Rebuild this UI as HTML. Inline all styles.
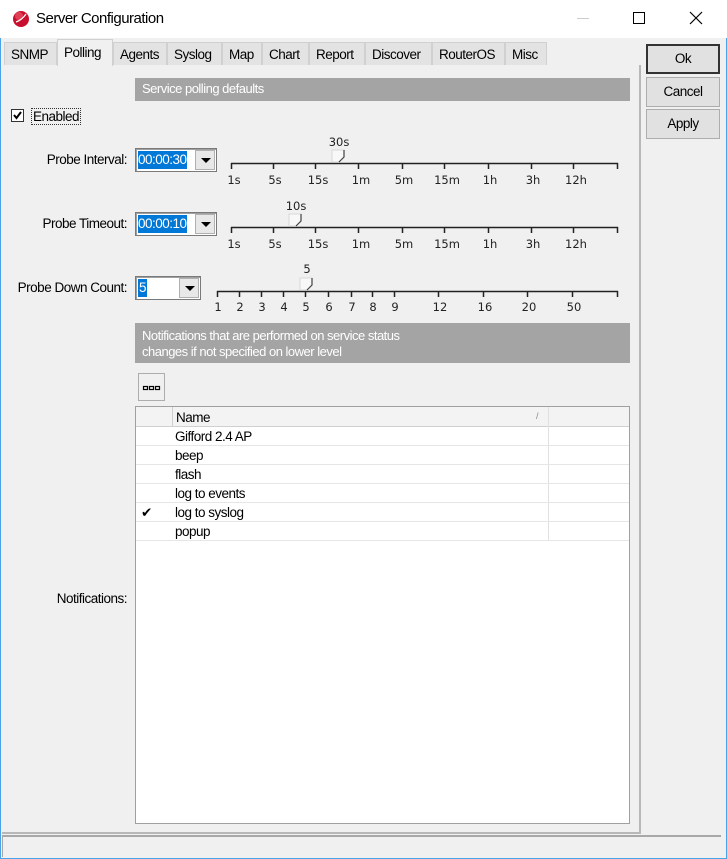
<!DOCTYPE html>
<html><head><meta charset="utf-8"><style>
*{margin:0;padding:0;box-sizing:border-box}
body{width:727px;height:859px;background:#f0f0f0;font-family:"Liberation Sans",sans-serif;font-size:13px;color:#000;position:relative;overflow:hidden;letter-spacing:-0.5px}
.a{position:absolute}
.win{left:0;top:0;width:727px;height:859px;border:1px solid #4aa3e8;border-top:none}
.title{left:0;top:0;width:727px;height:38px;background:#fff}
.tab{top:42px;height:23px;background:#e3e3e3;border:1px solid #d0d0d0;border-bottom:none;padding:4px 6px 0;font-size:13.5px}
.panel{left:2px;top:65px;width:639px;height:769px;border-right:2px solid #b8b8b8;border-bottom:2px solid #b8b8b8;background:#f0f0f0}
.hdr{background:#a4a4a4;color:#fff;padding:3px 7px;font-size:13px}
.lbl{font-size:13.5px;text-align:right}
.combo{height:24px;border:1px solid #7a7a7a;background:#fff;box-shadow:inset 1px 1px #a0a0a0}
.combo .sel{position:absolute;left:2px;top:2px;background:#0078d7;color:#fff;padding:1px 0;font-size:13.5px;line-height:16px}
.combo .btn{position:absolute;right:1px;top:1px;width:20px;height:20px;background:#e8e8e8;border:1px solid #b0b0b0}
.combo .btn:after{content:"";position:absolute;left:5px;top:7px;border-left:5px solid transparent;border-right:5px solid transparent;border-top:5px solid #000}
.rbtn{left:646px;width:74px;height:30px;border:1px solid #adadad;background:#e1e1e1;text-align:center;line-height:28px;font-size:13.5px}
.grid{left:135px;top:406px;width:495px;height:418px;background:#fff;border:1px solid #a0a0a0}
.row{position:absolute;left:0;width:493px;height:19px;border-bottom:1px solid #e6e6e6}
.row span{position:absolute;left:39px;top:2px;font-size:13.5px}
</style></head><body>
<div class="a win"></div>
<div class="a title">
 <svg class="a" style="left:12px;top:10px" width="18" height="18" viewBox="0 0 18 18"><circle cx="9" cy="9" r="8" fill="#c8102e"/><circle cx="7" cy="6" r="4" fill="#f06070" opacity=".6"/><path d="M4 12 Q10 10 14 4" stroke="#fff" stroke-width="1.2" fill="none"/></svg>
 <div class="a" style="left:36px;top:10px;font-size:15px">Server Configuration</div>
 <div class="a" style="left:577px;top:18px;width:12px;height:1px;background:#ccc"></div>
 <div class="a" style="left:633px;top:12px;width:12px;height:12px;border:1px solid #000"></div>
 <svg class="a" style="left:689px;top:11px" width="14" height="14"><path d="M1 1L13 13M13 1L1 13" stroke="#000" stroke-width="1.2"/></svg>
</div>
<div class="a panel"></div>
<div class="a tab" style="left:4px;width:53px">SNMP</div>
<div class="a tab" style="left:57px;top:39px;height:27px;width:56px;background:#f0f0f0;padding-top:5px">Polling</div>
<div class="a tab" style="left:113px;width:54px">Agents</div>
<div class="a tab" style="left:167px;width:55px">Syslog</div>
<div class="a tab" style="left:222px;width:40px">Map</div>
<div class="a tab" style="left:262px;width:47px">Chart</div>
<div class="a tab" style="left:309px;width:56px">Report</div>
<div class="a tab" style="left:365px;width:67px">Discover</div>
<div class="a tab" style="left:432px;width:73px">RouterOS</div>
<div class="a tab" style="left:505px;width:42px">Misc</div>

<div class="a rbtn" style="top:44px;border:2px solid #333;line-height:26px">Ok</div>
<div class="a rbtn" style="top:77px">Cancel</div>
<div class="a rbtn" style="top:109px">Apply</div>

<div class="a hdr" style="left:135px;top:78px;width:495px;height:23px">Service polling defaults</div>
<div class="a" style="left:11px;top:109px;width:13px;height:13px;border:1px solid #333;background:#fff"><svg width="11" height="11" style="position:absolute;left:0;top:0"><path d="M2 5L4.5 8L9 2" stroke="#000" stroke-width="2" fill="none"/></svg></div>
<div class="a" style="left:31px;top:108px;border:1px dotted #333;padding:0 1px;font-size:13.5px;line-height:15px">Enabled</div>

<div class="a lbl" style="left:0;top:152px;width:127px">Probe Interval:</div>
<div class="a combo" style="left:135px;top:148px;width:82px"><div class="sel">00:00:30</div><div class="btn"></div></div>
<div class="a lbl" style="left:0;top:216px;width:127px">Probe Timeout:</div>
<div class="a combo" style="left:135px;top:212px;width:82px"><div class="sel">00:00:10</div><div class="btn"></div></div>
<div class="a lbl" style="left:0;top:280px;width:127px">Probe Down Count:</div>
<div class="a combo" style="left:135px;top:276px;width:66px"><div class="sel" style="padding:1px 1px">5</div><div class="btn"></div></div>

<svg class="a" style="left:0;top:0;letter-spacing:0" width="727" height="330" font-family="DejaVu Sans,sans-serif" font-size="11.5" fill="#222">
 <g stroke="#222" stroke-width="1.5">
  <path d="M231 163.5H618M231 227.5H618M217 291.5H618"/>
  <path d="M231.5 163v6M273.5 163v6M315.5 163v6M358.5 163v6M402.5 163v6M444.5 163v6M488.5 163v6M531.5 163v6M573.5 163v6M617.5 163v6"/>
  <path d="M231.5 227v6M273.5 227v6M315.5 227v6M358.5 227v6M402.5 227v6M444.5 227v6M488.5 227v6M531.5 227v6M573.5 227v6M617.5 227v6"/>
  <path d="M217.5 291v6M239.5 291v6M261.5 291v6M283.5 291v6M305.5 291v6M328.5 291v6M351.5 291v6M372.5 291v6M394.5 291v6M438.5 291v6M483.5 291v6M527.5 291v6M572.5 291v6M617.5 291v6"/>
 </g>
 <g text-anchor="middle">
  <text x="234" y="184">1s</text><text x="275" y="184">5s</text><text x="318" y="184">15s</text><text x="361" y="184">1m</text><text x="404" y="184">5m</text><text x="447" y="184">15m</text><text x="490" y="184">1h</text><text x="533" y="184">3h</text><text x="576" y="184">12h</text>
  <text x="234" y="248">1s</text><text x="275" y="248">5s</text><text x="318" y="248">15s</text><text x="361" y="248">1m</text><text x="404" y="248">5m</text><text x="447" y="248">15m</text><text x="490" y="248">1h</text><text x="533" y="248">3h</text><text x="576" y="248">12h</text>
  <text x="218" y="311">1</text><text x="240" y="311">2</text><text x="262" y="311">3</text><text x="284" y="311">4</text><text x="306" y="311">5</text><text x="329" y="311">6</text><text x="352" y="311">7</text><text x="373" y="311">8</text><text x="395" y="311">9</text><text x="440" y="311">12</text><text x="485" y="311">16</text><text x="529" y="311">20</text><text x="574" y="311">50</text>
  <text x="339" y="146">30s</text><text x="296" y="210">10s</text><text x="307" y="273">5</text>
 </g>
 <g fill="#fafafa" stroke="#444" stroke-width="1.2">
  <path d="M332 150h12v7l-5 5h-7z" stroke="#ddd" fill="#f8f8f8"/><path d="M344 150v7l-5 5" fill="none"/>
  <path d="M289 214h12v7l-5 5h-7z" stroke="#ddd" fill="#f8f8f8"/><path d="M301 214v7l-5 5" fill="none"/>
  <path d="M300 278h12v7l-5 5h-7z" stroke="#ddd" fill="#f8f8f8"/><path d="M312 278v7l-5 5" fill="none"/>
 </g>
</svg>

<div class="a hdr" style="left:135px;top:323px;width:495px;height:40px;padding-top:5px;line-height:16px">Notifications that are performed on service status<br>changes if not specified on lower level</div>
<div class="a" style="left:138px;top:373px;width:27px;height:28px;border:1px solid #adadad;background:#f0f0f0"><svg width="25" height="26"><g fill="none" stroke="#000" stroke-width="1.2"><rect x="4.5" y="12.5" width="4" height="3"/><rect x="10.5" y="12.5" width="4" height="3"/><rect x="16.5" y="12.5" width="4" height="3"/></g></svg></div>

<div class="a grid">
 <div class="a" style="left:0;top:0;width:493px;height:20px;background:#f3f3f3;border-bottom:1px solid #d0d0d0"></div>
 <div class="a" style="left:36px;top:0;width:1px;height:20px;background:#d0d0d0"></div>
 <div class="a" style="left:412px;top:0;width:1px;height:134px;background:#e0e0e0"></div>
 <div class="a" style="left:40px;top:3px;font-size:13.5px">Name</div>
 <div class="a" style="left:400px;top:4px;font-size:9px;color:#888">/</div>
 <div class="row" style="top:20px"><span>Gifford 2.4 AP</span></div>
 <div class="row" style="top:39px"><span>beep</span></div>
 <div class="row" style="top:58px"><span>flash</span></div>
 <div class="row" style="top:77px"><span>log to events</span></div>
 <div class="row" style="top:96px"><span style="left:5px">✔</span><span>log to syslog</span></div>
 <div class="row" style="top:115px"><span>popup</span></div>
</div>
<div class="a lbl" style="left:0;top:591px;width:127px">Notifications:</div>

<div class="a" style="left:2px;top:835px;width:719px;height:22px;border-top:2px solid #a8a8a8;border-left:1px solid #a8a8a8"></div>
</body></html>
